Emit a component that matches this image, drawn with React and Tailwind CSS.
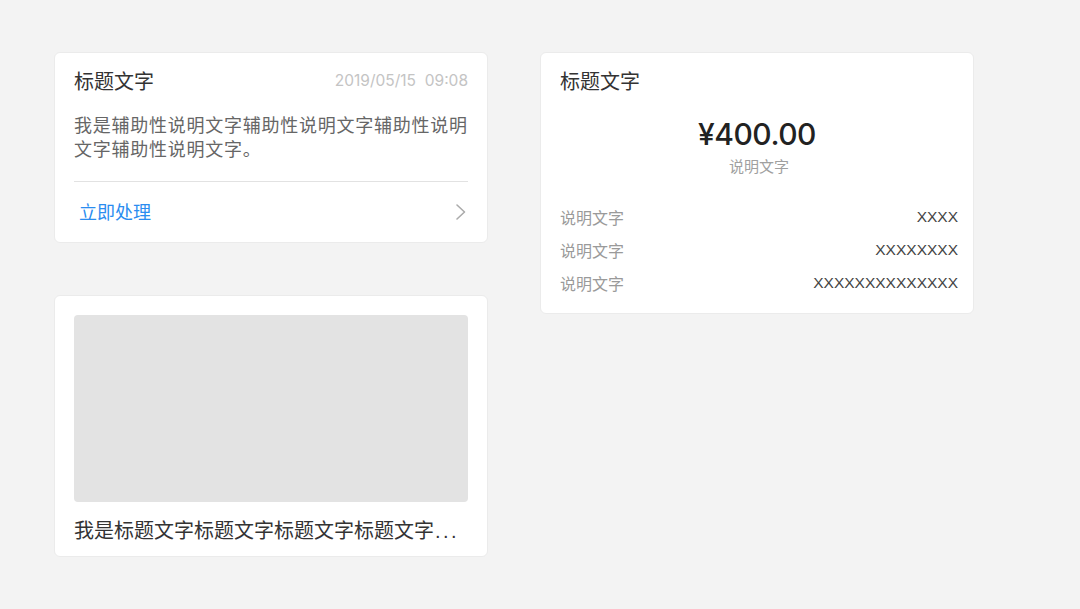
export default function App() {
  const font = { fontFamily: '"Noto Sans CJK SC", "Noto Sans", sans-serif' };
  const num = '"Liberation Sans", "Noto Sans CJK SC", sans-serif';
  const inter = '"Inter", "Noto Sans CJK SC", sans-serif';
  return (
    <div className="w-[1080px] h-[609px] bg-[#f3f3f3] flex gap-[52px] pt-[52px] pl-[54px]" style={font}>
      <div className="flex flex-col gap-[52px] w-[434px]">
        {/* Card 1 */}
        <div className="bg-white rounded-[6px] border border-[#ebebeb] w-[434px] h-[191px] px-[19px] pt-[16px] flex flex-col">
          <div className="flex items-center justify-between h-[24px]">
            <span className="text-[20px] leading-[24px] text-[#333]">标题文字</span>
            <span className="text-[15.5px] text-[#c4c4c4] whitespace-pre" style={{ fontFamily: inter }}>2019/05/15  09:08</span>
          </div>
          <p className="mt-[19px] text-[18px] leading-[24px] tracking-[0.75px] text-[#666]">
            我是辅助性说明文字辅助性说明文字辅助性说明文字辅助性说明文字。
          </p>
          <div className="mt-[21px] border-t border-[#e2e2e2]"></div>
          <div className="flex-1 flex items-center justify-between pl-[5px] pb-[1px]">
            <span className="text-[18px] text-[#2a8cf0]">立即处理</span>
            <svg width="12" height="18" viewBox="0 0 12 18" className="mr-[1px]">
              <path d="M2 2 L9.5 9 L2 16" fill="none" stroke="#ababab" strokeWidth="1.6" strokeLinecap="round" strokeLinejoin="round" />
            </svg>
          </div>
        </div>
        {/* Card 3 */}
        <div className="bg-white rounded-[6px] border border-[#ebebeb] w-[434px] h-[262px] px-[19px] pt-[19px] flex flex-col">
          <div className="h-[187px] rounded-[4px] bg-[#e3e3e3]"></div>
          <div className="mt-[14px] text-[20px] leading-[28px] text-[#333] whitespace-nowrap">
            我是标题文字标题文字标题文字标题文字<span className="tracking-[2.5px] pl-[1px]" style={{ fontFamily: num }}>...</span>
          </div>
        </div>
      </div>
      {/* Card 2 */}
      <div className="bg-white rounded-[6px] border border-[#ebebeb] w-[434px] h-[262px] pl-[19px] pr-[15px] pt-[16px] flex flex-col">
        <div className="text-[20px] leading-[24px] text-[#333]">标题文字</div>
        <div className="mt-[23px] text-center text-[30px] leading-[36px] font-medium text-[#222] tracking-[-0.5px] pr-[4px]" style={{ fontFamily: inter }}>¥400.00</div>
        <div className="mt-[4px] text-center text-[15px] leading-[20px] text-[#a0a0a0]">说明文字</div>
        <div className="mt-[24px] flex flex-col">
          {['XXXX', 'XXXXXXXX', 'XXXXXXXXXXXXXX'].map((v, i) => (
            <div key={i} className="flex items-center justify-between h-[33px]">
              <span className="text-[16px] text-[#9a9a9a]">说明文字</span>
              <span className="text-[15.5px] text-[#444]" style={{ fontFamily: num }}>{v}</span>
            </div>
          ))}
        </div>
      </div>
    </div>
  );
}
